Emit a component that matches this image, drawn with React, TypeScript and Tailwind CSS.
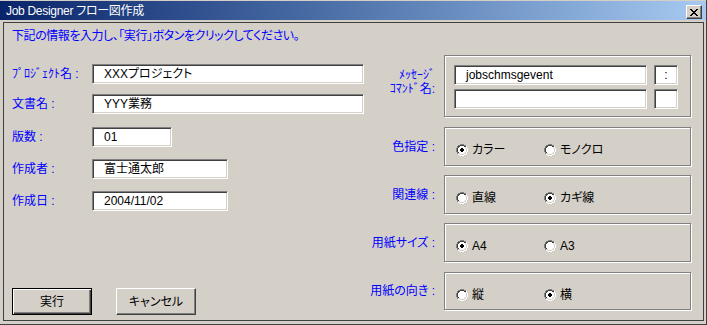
import React from 'react'

// Win classic radio, 12x12 pixel map
// G outer shadow, D inner dark, W white outer, L inner light, F fill
const RADIO = [
  '....GGGG....',
  '..GGDDDDGG..',
  '.GDDFFFFDDW.',
  '.GDFFFFFFLW.',
  'GDFFFFFFFFLW',
  'GDFFFFFFFFLW',
  'GDFFFFFFFFLW',
  'GDFFFFFFFFLW',
  '.GDFFFFFFLW.',
  '.GLLFFFFLLW.',
  '..WWLLLLWW..',
  '....WWWW....',
]
const COLORS: Record<string, string> = {
  G: '#808080',
  D: '#404040',
  W: '#ffffff',
  L: '#d4d0c8',
  F: '#ffffff',
}

function Radio({ checked }: { checked?: boolean }) {
  const cells: React.ReactNode[] = []
  RADIO.forEach((row, y) =>
    row.split('').forEach((c, x) => {
      if (c === '.') return
      cells.push(<rect key={`${x}-${y}`} x={x} y={y} width={1} height={1} fill={COLORS[c]} />)
    }),
  )
  return (
    <svg width="12" height="12" viewBox="0 0 12 12" shapeRendering="crispEdges" className="shrink-0">
      {cells}
      {checked && (
        <>
          <rect x={5} y={4} width={2} height={4} fill="#000" />
          <rect x={4} y={5} width={4} height={2} fill="#000" />
        </>
      )}
    </svg>
  )
}

function CloseGlyph() {
  const rows = ['XX....XX', '.XX..XX.', '..XXXX..', '...XX...', '..XXXX..', '.XX..XX.', 'XX....XX']
  return (
    <svg width="8" height="7" viewBox="0 0 8 7" shapeRendering="crispEdges">
      {rows.flatMap((r, y) =>
        r.split('').map((c, x) => (c === 'X' ? <rect key={`${x}-${y}`} x={x} y={y} width={1} height={1} fill="#000" /> : null)),
      )}
    </svg>
  )
}

function Field({ w, value, center }: { w: string; value?: string; center?: boolean }) {
  return (
    <div
      className={`${w} h-[20px] flex items-center bg-white border border-t-[#808080] border-l-[#808080] border-r-white border-b-white shadow-[inset_1px_1px_0_#404040,inset_-1px_-1px_0_#d4d0c8] text-[12px] leading-[14px] text-black whitespace-nowrap ${center ? 'justify-center' : 'pl-[11px]'}`}
    >
      {value}
    </div>
  )
}

function FormRow({ label, className, children }: { label: string; className: string; children: React.ReactNode }) {
  return (
    <div className={`flex items-center ${className}`}>
      <div className="w-[80px] text-[12px] leading-[14px] text-[#0000ff] whitespace-nowrap">{label}</div>
      {children}
    </div>
  )
}

function Option({ label, checked }: { label: string; checked?: boolean }) {
  return (
    <div className="w-[88px] flex items-center gap-[4px]">
      <Radio checked={checked} />
      <span className="text-[12px] leading-[14px] text-black">{label}</span>
    </div>
  )
}

function RadioGroup({ label, h, mt, a, b, first }: { label: string; h: string; mt: string; a: string; b: string; first: boolean }) {
  return (
    <div className={`flex items-center ${mt}`}>
      <div className="w-[65px] text-right text-[12px] leading-[14px] text-[#0000ff] whitespace-nowrap">{label}</div>
      <div className={`ml-[9px] w-[247px] ${h} border border-[#808080] shadow-[inset_1px_1px_0_#fff,1px_1px_0_#fff] flex items-start pt-[15px] pl-[11px]`}>
        <Option label={a} checked={first} />
        <Option label={b} checked={!first} />
      </div>
    </div>
  )
}

export default function App() {
  return (
    <div className="w-[707px] h-[325px] bg-[#d4d0c8] border-r border-b border-[#404040] flex flex-col font-['Liberation_Sans','Noto_Sans_CJK_JP',sans-serif] [font-feature-settings:'palt'] select-none">
      {/* title bar */}
      <div className="mt-[1px] h-[19px] w-[706px] flex items-start bg-gradient-to-r from-[#0a246a] to-[#a6caf0]">
        <span className="ml-[6px] mt-[3px] text-[12px] leading-[14px] tracking-[-0.3px] text-white whitespace-nowrap">Job Designer フロー図作成</span>
        <div className="ml-auto mr-[4px] mt-[4px] w-[16px] h-[14px] flex items-center justify-center bg-[#d4d0c8] border border-t-white border-l-white border-r-[#404040] border-b-[#404040] shadow-[inset_-1px_-1px_0_#808080]">
          <CloseGlyph />
        </div>
      </div>

      {/* client area */}
      <div className="mt-[2px] ml-[3px] w-[701px] h-[299px] border border-[#404040] flex">
        {/* left column */}
        <div className="w-[366px] h-full flex flex-col pl-[8px] pt-[6px] pb-[5px]">
          <div className="h-[14px] text-[12px] leading-[14px] tracking-[-0.45px] text-[#0000ff] whitespace-nowrap">
            下記の情報を入力し、「実行」ボタンをクリックしてください。
          </div>
          <div className="mt-[21px] flex items-center">
            <div className="w-[80px] text-[12px] leading-[14px] text-[#0000ff] whitespace-nowrap [font-feature-settings:normal]">ﾌﾟﾛｼﾞｪｸﾄ名 :</div>
            <Field w="w-[272px]" value="XXXプロジェクト" />
          </div>
          <FormRow label="文書名 :" className="mt-[10px]">
            <Field w="w-[272px]" value="YYY業務" />
          </FormRow>
          <FormRow label="版数 :" className="mt-[13px]">
            <Field w="w-[80px]" value="01" />
          </FormRow>
          <FormRow label="作成者 :" className="mt-[12px]">
            <Field w="w-[136px]" value="富士通太郎" />
          </FormRow>
          <FormRow label="作成日 :" className="mt-[12px]">
            <Field w="w-[136px]" value="2004/11/02" />
          </FormRow>

          <div className="mt-auto flex gap-[24px]">
            <button className="w-[80px] h-[27px] border border-black bg-[#d4d0c8] shadow-[inset_1px_1px_0_#fff,inset_-1px_-1px_0_#404040,inset_-2px_-2px_0_#808080] text-[12px] leading-[14px] text-black">
              実行
            </button>
            <button className="w-[80px] h-[27px] border border-t-white border-l-white border-r-[#404040] border-b-[#404040] bg-[#d4d0c8] shadow-[inset_-1px_-1px_0_#808080] text-[12px] leading-[14px] text-black">
              キャンセル
            </button>
          </div>
        </div>

        {/* right column */}
        <div className="flex-1 flex flex-col pt-[32px]">
          <div className="flex items-start">
            <div className="w-[65px] mt-[13px] text-right text-[12px] leading-[14px] text-[#0000ff] whitespace-nowrap [font-feature-settings:normal]">
              <div>ﾒｯｾｰｼﾞ</div>
              <div>ｺﾏﾝﾄﾞ名:</div>
            </div>
            <div className="ml-[9px] w-[247px] h-[62px] border border-[#808080] shadow-[inset_1px_1px_0_#fff,1px_1px_0_#fff] flex flex-col gap-[4px] pt-[9px] pl-[9px]">
              <div className="flex gap-[7px]">
                <Field w="w-[193px]" value="jobschmsgevent" />
                <Field w="w-[24px]" value=":" center />
              </div>
              <div className="flex gap-[7px]">
                <Field w="w-[193px]" />
                <Field w="w-[24px]" center />
              </div>
            </div>
          </div>
          <RadioGroup label="色指定 :" h="h-[39px]" mt="mt-[10px]" a="カラー" b="モノクロ" first />
          <RadioGroup label="関連線 :" h="h-[39px]" mt="mt-[9px]" a="直線" b="カギ線" first={false} />
          <RadioGroup label="用紙サイズ :" h="h-[39px]" mt="mt-[9px]" a="A4" b="A3" first />
          <RadioGroup label="用紙の向き :" h="h-[38px]" mt="mt-[10px]" a="縦" b="横" first={false} />
        </div>
      </div>
    </div>
  )
}
